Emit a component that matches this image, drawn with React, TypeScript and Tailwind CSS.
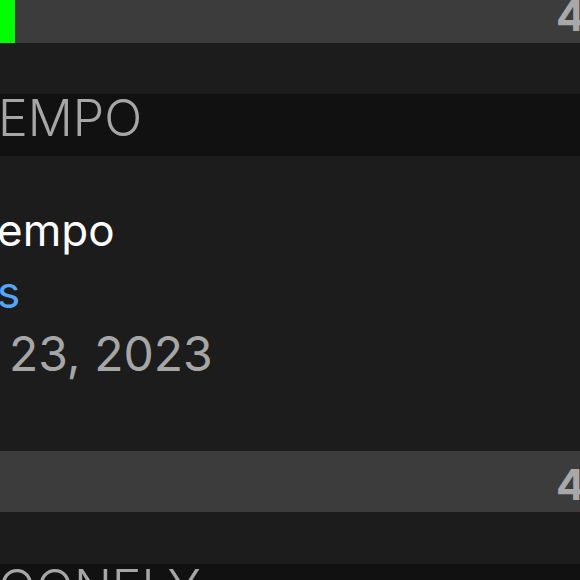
import React from "react";

const font = { fontFamily: "Inter, 'Noto Sans', sans-serif" };

const CountBar = ({ count, marked }: { count: string; marked?: boolean }) => (
  <div className="flex h-[61px] items-center bg-[#3c3c3c]">
    <div className={`h-full w-[15px] ${marked ? "bg-[#00ff00]" : ""}`} />
    <div className="flex-1" />
    <span className="-mr-[5px] pt-[4px] text-[43px] leading-[40px] font-bold text-[#a8a8a8]">
      {count}
    </span>
  </div>
);

const SectionHeader = ({ title }: { title: string }) => (
  <div className="h-[62px] bg-[#111111]">
    <div className="-ml-[2px] text-[50px] leading-[48px] font-light text-[#a6a6a6]">
      {title}
    </div>
  </div>
);

export default function App() {
  return (
    <div className="h-[580px] w-[580px] overflow-hidden bg-[#1c1c1c]" style={font}>
      {/* list scrolled by 18px */}
      <div className="-mt-[18px] flex flex-col">
        <CountBar count="4" marked />
        <div className="h-[51px]" />
        <SectionHeader title="EMPO" />
        <div className="flex flex-col pt-[43px] pb-[66px] leading-[62px]">
          <span className="-ml-[3px] text-[44px] text-white">empo</span>
          <span className="-ml-[3px] text-[44px] text-[#55a6f6]">s</span>
          <span className="ml-[9px] text-[48px] text-[#a6a6a6]">23, 2023</span>
        </div>
        <CountBar count="4" />
        <div className="h-[52px]" />
        <SectionHeader title="OONELY" />
      </div>
    </div>
  );
}
